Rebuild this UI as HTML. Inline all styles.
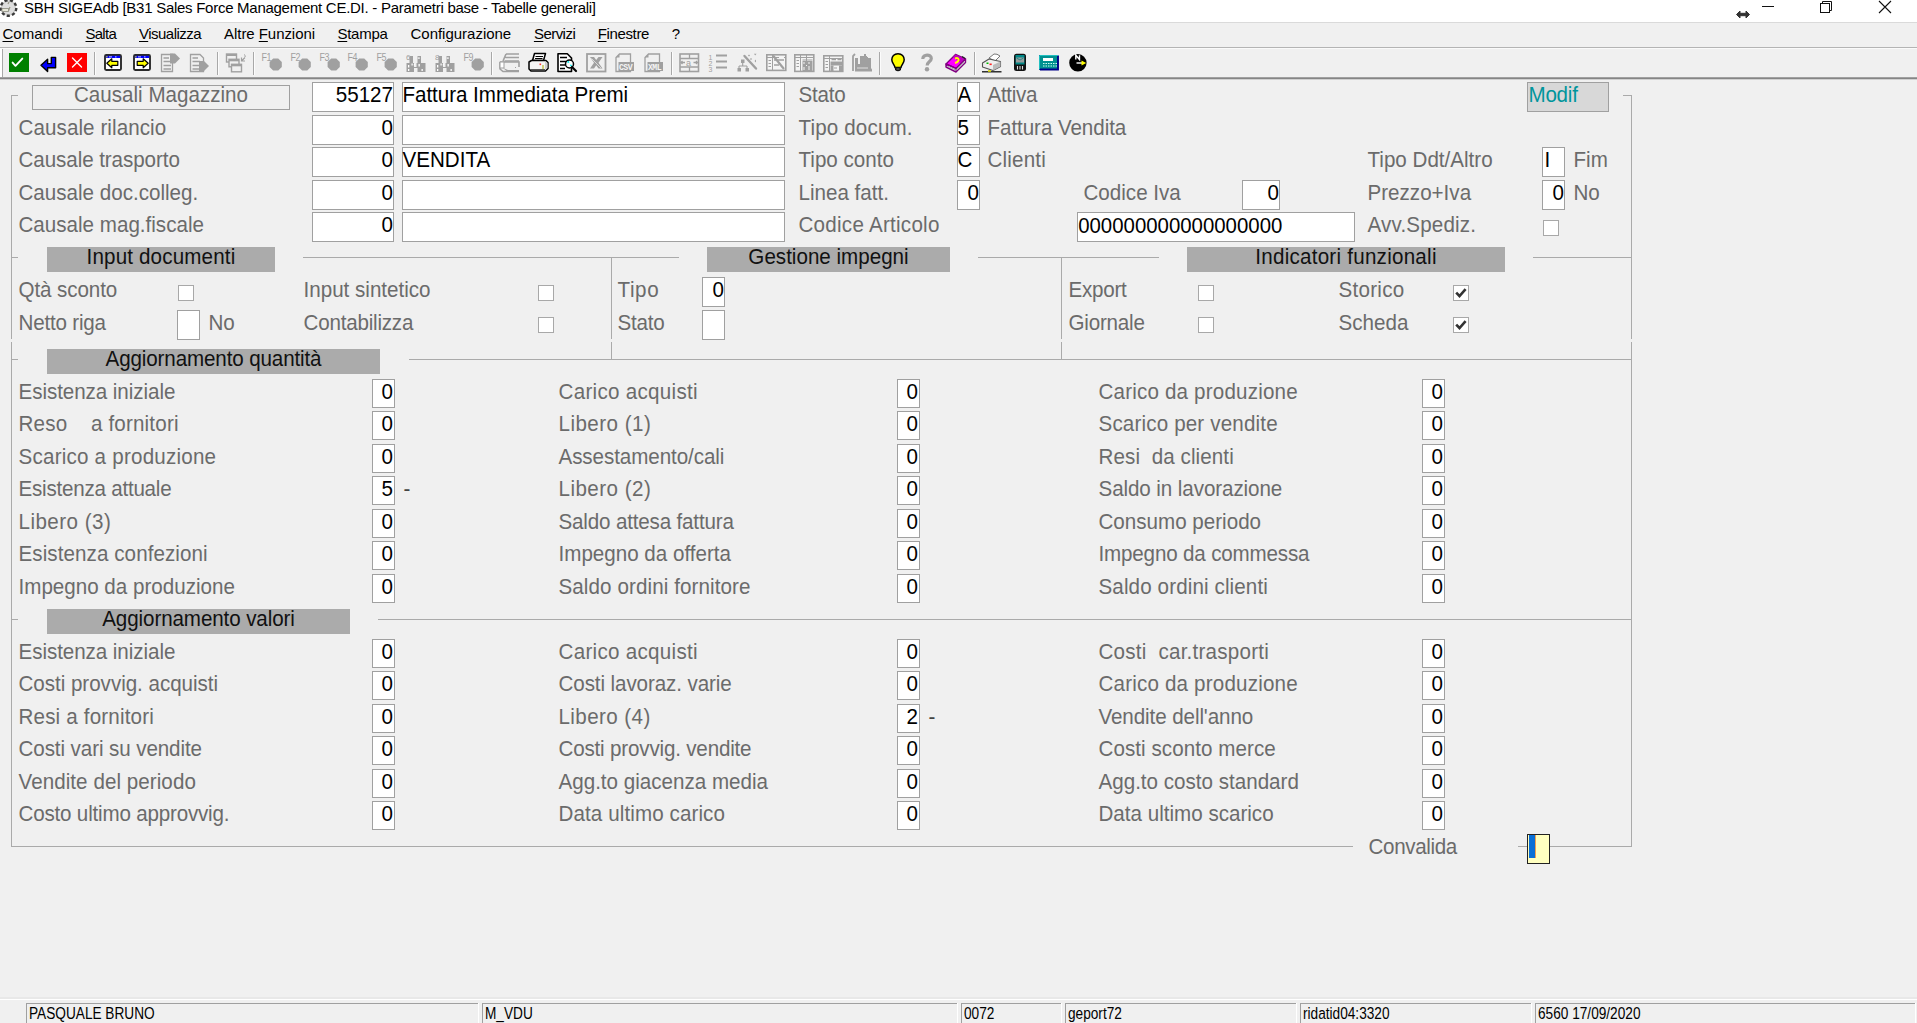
<!DOCTYPE html>
<html><head><meta charset="utf-8"><title>SBH SIGEAdb</title>
<style>
html,body{margin:0;padding:0;width:1917px;height:1023px;overflow:hidden;background:#f0f0f0;font-family:"Liberation Sans",sans-serif;}
.t{position:absolute;white-space:pre;}
.b{position:absolute;box-sizing:border-box;}
.l{position:absolute;}
</style></head><body>

<div class="l" style="left:0;top:0;width:1917px;height:22px;background:#fff"></div>
<div class="l" style="left:0;top:22px;width:1917px;height:1px;background:#dadada"></div>
<svg class="l" style="left:0;top:-1px" width="19" height="19" viewBox="0 0 19 19">
<circle cx="8.5" cy="9" r="7.8" fill="#d4d4d4" stroke="#3a3a3a" stroke-width="2.4" stroke-dasharray="3.2 2.2"/>
<circle cx="8.5" cy="9" r="6" fill="#dedede"/>
<path d="M2.5 11.5 H8.5 L10 8 M8 5 L9 3" fill="none" stroke="#9a9a88" stroke-width="1.3"/>
<rect x="2" y="9.5" width="6.5" height="3" fill="#e8e8d8" stroke="#8a8a80" stroke-width="0.8"/>
</svg>
<div class="t" style="left:24.0px;top:0.30px;font-size:15px;line-height:15px;color:#000;letter-spacing:-0.27px;">SBH SIGEAdb [B31 Sales Force Management CE.DI. - Parametri base - Tabelle generali]</div>
<svg class="l" style="left:1735px;top:9px" width="16" height="11" viewBox="0 0 16 11">
<path d="M1.5 5.5 L5 2 L5 4.3 L11 4.3 L11 2 L14.5 5.5 L11 9 L11 6.7 L5 6.7 L5 9 Z" fill="#333" stroke="#333" stroke-width="1"/></svg>
<div class="l" style="left:1762px;top:6px;width:12px;height:1px;background:#111"></div>
<svg class="l" style="left:1819px;top:0" width="15" height="15" viewBox="0 0 15 15">
<rect x="1.5" y="3.5" width="9" height="9" fill="none" stroke="#111" stroke-width="1"/>
<path d="M3.5 3.5 L3.5 1.5 L12.5 1.5 L12.5 10.5 L10.5 10.5" fill="none" stroke="#111" stroke-width="1"/></svg>
<svg class="l" style="left:1878px;top:0" width="15" height="15" viewBox="0 0 15 15">
<path d="M1 1 L13 13 M13 1 L1 13" fill="none" stroke="#111" stroke-width="1.1"/></svg>
<div class="t" style="left:2.5px;top:26.30px;font-size:15px;line-height:15px;color:#000;letter-spacing:0.010px;text-decoration-thickness:1px;text-underline-offset:2px;"><u>C</u>omandi</div>
<div class="t" style="left:85.5px;top:26.30px;font-size:15px;line-height:15px;color:#000;letter-spacing:-0.740px;text-decoration-thickness:1px;text-underline-offset:2px;"><u>S</u>alta</div>
<div class="t" style="left:139.0px;top:26.30px;font-size:15px;line-height:15px;color:#000;letter-spacing:-0.517px;text-decoration-thickness:1px;text-underline-offset:2px;"><u>V</u>isualizza</div>
<div class="t" style="left:224.1px;top:26.30px;font-size:15px;line-height:15px;color:#000;letter-spacing:-0.059px;text-decoration-thickness:1px;text-underline-offset:2px;">Altre <u>F</u>unzioni</div>
<div class="t" style="left:337.5px;top:26.30px;font-size:15px;line-height:15px;color:#000;letter-spacing:-0.283px;text-decoration-thickness:1px;text-underline-offset:2px;"><u>S</u>tampa</div>
<div class="t" style="left:410.5px;top:26.30px;font-size:15px;line-height:15px;color:#000;letter-spacing:-0.015px;text-decoration-thickness:1px;text-underline-offset:2px;">Confi<u>g</u>urazione</div>
<div class="t" style="left:533.9px;top:26.30px;font-size:15px;line-height:15px;color:#000;letter-spacing:-0.531px;text-decoration-thickness:1px;text-underline-offset:2px;"><u>S</u>ervizi</div>
<div class="t" style="left:597.7px;top:26.30px;font-size:15px;line-height:15px;color:#000;letter-spacing:-0.361px;text-decoration-thickness:1px;text-underline-offset:2px;"><u>F</u>inestre</div>
<div class="t" style="left:671.8px;top:26.30px;font-size:15px;line-height:15px;color:#000;letter-spacing:-2.040px;text-decoration-thickness:1px;text-underline-offset:2px;">?</div>
<div class="l" style="left:0;top:47px;width:1917px;height:1px;background:#b4b4b4"></div>
<div class="l" style="left:0;top:48px;width:1917px;height:1px;background:#fafafa"></div>
<div class="l" style="left:0;top:49px;width:2px;height:28px;background:#fff"></div>
<div class="l" style="left:2px;top:49px;width:1px;height:28px;background:#a8a8a8"></div>
<div class="l" style="left:0;top:77px;width:1917px;height:1px;background:#a0a0a0"></div>
<div class="l" style="left:0;top:78px;width:1917px;height:1px;background:#858585"></div>
<div class="l" style="left:0;top:79px;width:1917px;height:1px;background:#d0d0d0"></div>
<svg class="l" style="left:9px;top:53px" width="21" height="19" viewBox="0 0 21 19"><rect x="0" y="0" width="20" height="19" fill="#008000"/><path d="M3.6 9.6 L6.5 12.8 L13.3 5.6" fill="none" stroke="#fff" stroke-width="1.9" stroke-linecap="round" stroke-linejoin="round"/></svg>
<svg class="l" style="left:40px;top:56px" width="18" height="17" viewBox="0 0 18 17"><path d="M11.3 1.4 L15.6 1.4 L15.6 11.8 L7.6 11.8 L7.6 15.6 L1 9.3 L7.6 3.3 L7.6 7.6 L11.3 7.6 Z" fill="#0000ff" stroke="#000" stroke-width="1.4" stroke-linejoin="round"/></svg>
<svg class="l" style="left:67px;top:53px" width="21" height="19" viewBox="0 0 21 19"><rect x="0" y="0" width="20" height="19" fill="#ff0000"/><path d="M5.5 5 L14.5 14 M14.5 5 L5.5 14" stroke="#fff" stroke-width="1.4" stroke-linecap="round"/></svg>
<div class="l" style="left:94px;top:52px;width:1px;height:23px;background:#a8a8a8"></div>
<div class="l" style="left:95px;top:52px;width:1px;height:23px;background:#fcfcfc"></div>
<div class="l" style="left:217px;top:52px;width:1px;height:23px;background:#a8a8a8"></div>
<div class="l" style="left:218px;top:52px;width:1px;height:23px;background:#fcfcfc"></div>
<div class="l" style="left:253px;top:52px;width:1px;height:23px;background:#a8a8a8"></div>
<div class="l" style="left:254px;top:52px;width:1px;height:23px;background:#fcfcfc"></div>
<div class="l" style="left:491px;top:52px;width:1px;height:23px;background:#a8a8a8"></div>
<div class="l" style="left:492px;top:52px;width:1px;height:23px;background:#fcfcfc"></div>
<div class="l" style="left:671px;top:52px;width:1px;height:23px;background:#a8a8a8"></div>
<div class="l" style="left:672px;top:52px;width:1px;height:23px;background:#fcfcfc"></div>
<div class="l" style="left:879px;top:52px;width:1px;height:23px;background:#a8a8a8"></div>
<div class="l" style="left:880px;top:52px;width:1px;height:23px;background:#fcfcfc"></div>
<div class="l" style="left:974px;top:52px;width:1px;height:23px;background:#a8a8a8"></div>
<div class="l" style="left:975px;top:52px;width:1px;height:23px;background:#fcfcfc"></div>
<svg class="l" style="left:104px;top:54px" width="18" height="17" viewBox="0 0 18 17"><rect x="1" y="1" width="16" height="15" rx="1.2" fill="#fff" stroke="#2a2a2a" stroke-width="1.9"/><rect x="1.8" y="1.8" width="14.4" height="2.2" fill="#0000ff"/><rect x="2.3" y="2.2" width="1.2" height="1.2" fill="#ff0"/><rect x="5" y="2.5" width="3" height="0.8" fill="#fff"/><rect x="11" y="2.5" width="1.5" height="0.8" fill="#fff"/><path d="M2.8 9.3 L7.8 4.8 L7.8 7.3 L13.8 7.3 L13.8 11.3 L7.8 11.3 L7.8 13.8 Z" fill="#ffff00" stroke="#000" stroke-width="1.2" stroke-linejoin="round"/></svg>
<svg class="l" style="left:133px;top:54px" width="18" height="17" viewBox="0 0 18 17"><rect x="1" y="1" width="16" height="15" rx="1.2" fill="#fff" stroke="#2a2a2a" stroke-width="1.9"/><rect x="1.8" y="1.8" width="14.4" height="2.2" fill="#0000ff"/><rect x="2.3" y="2.2" width="1.2" height="1.2" fill="#ff0"/><rect x="5" y="2.5" width="3" height="0.8" fill="#fff"/><rect x="11" y="2.5" width="1.5" height="0.8" fill="#fff"/><path d="M15.2 9.3 L10.2 4.8 L10.2 7.3 L4.2 7.3 L4.2 11.3 L10.2 11.3 L10.2 13.8 Z" fill="#ffff00" stroke="#000" stroke-width="1.2" stroke-linejoin="round"/></svg>
<svg class="l" style="left:160px;top:53px" width="21" height="20" viewBox="0 0 21 20"><path d="M1.5 1.5 H12.5 L12.5 1.5 V18.5 H1.5 Z" fill="none" stroke="#a0a0a0" stroke-width="1.3"/><path d="M3.5 5 H9 M3.5 8.5 H11 M3.5 12.5 H11 M3.5 16 H11" stroke="#a0a0a0" stroke-width="1.4"/><path d="M10 0.5 L15 0.5 L20 5.5 L15 10.5 L10 10.5 Z" fill="#a0a0a0"/></svg>
<svg class="l" style="left:189px;top:53px" width="21" height="20" viewBox="0 0 21 20"><path d="M1.5 1.5 H11 L14.5 5 V18.5 H1.5 Z" fill="none" stroke="#a0a0a0" stroke-width="1.3"/><path d="M3.5 5 H9 M3.5 8.5 H11 M3.5 12.5 H11 M3.5 16 H11" stroke="#a0a0a0" stroke-width="1.4"/><path d="M10 8 L15 8 L20 13 L15 18 L10 18 Z" fill="#a0a0a0"/></svg>
<svg class="l" style="left:225px;top:53px" width="22" height="20" viewBox="0 0 22 20"><rect x="1.5" y="1" width="10" height="8" fill="#f0f0f0" stroke="#a0a0a0" stroke-width="1.4"/><rect x="1.5" y="1" width="10" height="2" fill="#a0a0a0"/><rect x="4" y="6.3" width="10" height="7.5" fill="#f0f0f0" stroke="#a0a0a0" stroke-width="1.4"/><rect x="4" y="6.3" width="10" height="2" fill="#a0a0a0"/><rect x="6.5" y="11.3" width="10" height="7.5" fill="#f0f0f0" stroke="#a0a0a0" stroke-width="1.4"/><rect x="6.5" y="11.3" width="10" height="2" fill="#a0a0a0"/><path d="M16.5 8 L20 4.5 M16.5 4.5 V8 H20" stroke="#a0a0a0" stroke-width="1.2" fill="none"/><path d="M19 1.5 Q21 2.5 20 4" stroke="#a0a0a0" stroke-width="1" fill="none"/></svg>
<svg class="l" style="left:261px;top:52px" width="24" height="22" viewBox="0 0 24 22"><text x="0.5" y="9" font-family="Liberation Sans" font-size="10.5" fill="#a0a0a0" transform="scale(0.85,1)" style="letter-spacing:-0.3px">F1</text><polygon points="20.80,15.03 17.23,18.60 12.17,18.60 8.60,15.03 8.60,9.97 12.17,6.40 17.23,6.40 20.80,9.97" fill="#a0a0a0"/></svg>
<svg class="l" style="left:290px;top:52px" width="24" height="22" viewBox="0 0 24 22"><text x="0.5" y="9" font-family="Liberation Sans" font-size="10.5" fill="#a0a0a0" transform="scale(0.85,1)" style="letter-spacing:-0.3px">F2</text><polygon points="20.80,15.03 17.23,18.60 12.17,18.60 8.60,15.03 8.60,9.97 12.17,6.40 17.23,6.40 20.80,9.97" fill="#a0a0a0"/></svg>
<svg class="l" style="left:319px;top:52px" width="24" height="22" viewBox="0 0 24 22"><text x="0.5" y="9" font-family="Liberation Sans" font-size="10.5" fill="#a0a0a0" transform="scale(0.85,1)" style="letter-spacing:-0.3px">F3</text><polygon points="20.80,15.03 17.23,18.60 12.17,18.60 8.60,15.03 8.60,9.97 12.17,6.40 17.23,6.40 20.80,9.97" fill="#a0a0a0"/></svg>
<svg class="l" style="left:347px;top:52px" width="24" height="22" viewBox="0 0 24 22"><text x="0.5" y="9" font-family="Liberation Sans" font-size="10.5" fill="#a0a0a0" transform="scale(0.85,1)" style="letter-spacing:-0.3px">F4</text><polygon points="20.80,15.03 17.23,18.60 12.17,18.60 8.60,15.03 8.60,9.97 12.17,6.40 17.23,6.40 20.80,9.97" fill="#a0a0a0"/></svg>
<svg class="l" style="left:376px;top:52px" width="24" height="22" viewBox="0 0 24 22"><text x="0.5" y="9" font-family="Liberation Sans" font-size="10.5" fill="#a0a0a0" transform="scale(0.85,1)" style="letter-spacing:-0.3px">F5</text><polygon points="20.80,15.03 17.23,18.60 12.17,18.60 8.60,15.03 8.60,9.97 12.17,6.40 17.23,6.40 20.80,9.97" fill="#a0a0a0"/></svg>
<svg class="l" style="left:406px;top:53px" width="21" height="20" viewBox="0 0 21 20"><text x="0" y="6.5" font-family="Liberation Sans" font-size="8" fill="#a0a0a0">6</text><path d="M3.5 3 H7 V10 H8 V14 H10.5 V10 H11.5 V3 H15 V10 H19.5 V19 H11.5 V15 H8 V19 H0.5 V10 H3.5 Z" fill="#a0a0a0"/><rect x="2" y="12" width="1.3" height="2.5" fill="#fff"/><rect x="2" y="16" width="1.3" height="2" fill="#fff"/><rect x="5.5" y="10.5" width="1.2" height="2" fill="#fff"/><rect x="12.5" y="11" width="1.3" height="2.5" fill="#fff"/><rect x="15.5" y="16" width="1.3" height="2" fill="#fff"/><rect x="11.8" y="4.5" width="2" height="1.2" fill="#fff"/><rect x="7.8" y="11" width="1" height="1.5" fill="#fff"/></svg>
<svg class="l" style="left:435px;top:53px" width="21" height="20" viewBox="0 0 21 20"><text x="0" y="6.5" font-family="Liberation Sans" font-size="8" fill="#a0a0a0">8</text><path d="M3.5 3 H7 V10 H8 V14 H10.5 V10 H11.5 V3 H15 V10 H19.5 V19 H11.5 V15 H8 V19 H0.5 V10 H3.5 Z" fill="#a0a0a0"/><rect x="2" y="12" width="1.3" height="2.5" fill="#fff"/><rect x="2" y="16" width="1.3" height="2" fill="#fff"/><rect x="5.5" y="10.5" width="1.2" height="2" fill="#fff"/><rect x="12.5" y="11" width="1.3" height="2.5" fill="#fff"/><rect x="15.5" y="16" width="1.3" height="2" fill="#fff"/><rect x="11.8" y="4.5" width="2" height="1.2" fill="#fff"/><rect x="7.8" y="11" width="1" height="1.5" fill="#fff"/></svg>
<svg class="l" style="left:463px;top:52px" width="24" height="22" viewBox="0 0 24 22"><text x="0.5" y="9" font-family="Liberation Sans" font-size="10.5" fill="#a0a0a0" transform="scale(0.85,1)" style="letter-spacing:-0.3px">F9</text><polygon points="20.80,15.03 17.23,18.60 12.17,18.60 8.60,15.03 8.60,9.97 12.17,6.40 17.23,6.40 20.80,9.97" fill="#a0a0a0"/></svg>
<svg class="l" style="left:499px;top:53px" width="22" height="20" viewBox="0 0 22 20"><path d="M7 1 H20 M6.5 4.5 H20 M5.5 8 H20 M7 1 L4 8" stroke="#a0a0a0" stroke-width="1.6" fill="none"/><path d="M1 9 H20 V14 M1 9 V16 L4 18.5 H20" fill="none" stroke="#a0a0a0" stroke-width="1.6"/><rect x="1" y="9" width="4" height="6" fill="#fff" stroke="#a0a0a0" stroke-width="1"/><path d="M4 15 L8 18.5 H20 V17 H9 Z" fill="#a0a0a0"/><rect x="16" y="14" width="1" height="1" fill="#a0a0a0"/></svg>
<svg class="l" style="left:528px;top:52px" width="21" height="20" viewBox="0 0 21 20"><path d="M6.5 1.5 H17.5 L15.5 8.5 H4.5 Z" fill="#fff" stroke="#000" stroke-width="1.5" stroke-linejoin="round"/><path d="M7.5 4.5 H15 M7 6.5 H14.5" stroke="#000" stroke-width="1.1"/><path d="M1 10 L3.5 8.5 H18 L20 10.5 V16.5 L17.5 19 H3 L1 17 Z" fill="#f4f4f4" stroke="#000" stroke-width="1.5" stroke-linejoin="round"/><path d="M2 17.5 H17" stroke="#555" stroke-width="1" fill="none"/><path d="M17 9.5 L19.5 11 V16 L17 18" fill="#ccc"/><rect x="11.5" y="11.5" width="1.6" height="1.6" fill="#f33"/><rect x="14.5" y="13" width="1" height="4" fill="#aa0"/></svg>
<svg class="l" style="left:557px;top:53px" width="21" height="20" viewBox="0 0 21 20"><path d="M1 0.8 H10.3 L14.5 5 V18.5 H1 Z" fill="#fff" stroke="#000" stroke-width="1.6" stroke-linejoin="round"/><path d="M3 4.5 H10 M3 8.5 H12 M3 12 H8 M3 15.5 H8" stroke="#000" stroke-width="1.4"/><circle cx="12.5" cy="11" r="4" fill="#fff" stroke="#000" stroke-width="1.5"/><path d="M10.5 9.5 L12 8.5 M13.5 13 L14.5 12" stroke="#1ee" stroke-width="1.8"/><path d="M15 14 L19 18" stroke="#000" stroke-width="2.2" stroke-linecap="round"/></svg>
<svg class="l" style="left:586px;top:53px" width="21" height="20" viewBox="0 0 21 20"><rect x="1" y="1" width="18.5" height="17.5" fill="none" stroke="#a0a0a0" stroke-width="1.8"/><path d="M4 4 H8 L10.2 7 L12.5 4 H16.5 L12.5 9.7 L16.5 15.5 H12.5 L10.2 12.3 L8 15.5 H4 L8 9.7 Z" fill="#a0a0a0"/><path d="M5.5 5.5 L15 15" stroke="#f0f0f0" stroke-width="0.7"/></svg>
<svg class="l" style="left:615px;top:53px" width="20" height="20" viewBox="0 0 20 20"><path d="M4.5 1 H15.5 V18.5 H1 V4.5 Z" fill="none" stroke="#a0a0a0" stroke-width="1.3"/><path d="M1 4.5 L4.5 1 V4.5 Z" fill="#a0a0a0"/><rect x="3.5" y="9" width="15.5" height="9" fill="#a0a0a0"/><text x="4" y="16.8" font-family="Liberation Mono" font-size="8.2" font-weight="bold" fill="#f4f4f4" style="letter-spacing:-0.6px">CSV</text></svg>
<svg class="l" style="left:644px;top:53px" width="20" height="20" viewBox="0 0 20 20"><path d="M4.5 1 H15.5 V18.5 H1 V4.5 Z" fill="none" stroke="#a0a0a0" stroke-width="1.3"/><path d="M1 4.5 L4.5 1 V4.5 Z" fill="#a0a0a0"/><rect x="3.5" y="9" width="15.5" height="9" fill="#a0a0a0"/><text x="4" y="16.8" font-family="Liberation Mono" font-size="8.2" font-weight="bold" fill="#f4f4f4" style="letter-spacing:-0.6px">XML</text></svg>
<svg class="l" style="left:679px;top:53px" width="21" height="20" viewBox="0 0 21 20"><rect x="1" y="1" width="18.5" height="17.5" fill="none" stroke="#a0a0a0" stroke-width="1.6"/><path d="M1 5.5 H19.5 M1 14 H19.5 M10.5 1 V5.5 M10.5 14 V18.5" stroke="#a0a0a0" stroke-width="1.3"/><text x="7" y="13" font-family="Liberation Sans" font-size="9" fill="#a0a0a0">a</text><path d="M2 9.5 H6 M14.5 9.5 H18.5 M3.5 8 L2 9.5 L3.5 11 M17 8 L18.5 9.5 L17 11" stroke="#a0a0a0" stroke-width="1.3" fill="none"/></svg>
<svg class="l" style="left:708px;top:53px" width="20" height="20" viewBox="0 0 20 20"><text x="0.5" y="6.5" font-family="Liberation Sans" font-size="7" fill="#a0a0a0">1</text><text x="0.5" y="12.5" font-family="Liberation Sans" font-size="7" fill="#a0a0a0">2</text><text x="0.5" y="18.5" font-family="Liberation Sans" font-size="7" fill="#a0a0a0">3</text><path d="M8 2.5 H19 M8 8.5 H19 M8 14.5 H19" stroke="#a0a0a0" stroke-width="1.8"/></svg>
<svg class="l" style="left:737px;top:53px" width="21" height="20" viewBox="0 0 21 20"><path d="M7.5 3 L19 15.5" stroke="#a0a0a0" stroke-width="2.4" stroke-linecap="round"/><rect x="4" y="6.5" width="3.5" height="3.5" fill="#a0a0a0"/><path d="M5.7 10 V13 M2 13 H10 M2 13 V15 M10 13 V15" stroke="#a0a0a0" stroke-width="1.1" fill="none"/><rect x="0.5" y="15" width="3.5" height="3.5" fill="#a0a0a0"/><rect x="8.5" y="15" width="3.5" height="3.5" fill="#a0a0a0"/><path d="M12 1.5 L13 2.5 L12 3.5 L11 2.5 Z M17 0.8 H19.5 L18.2 2.5 Z M14 5 L15 6 L14 7 L13 6 Z M19 6.5 V9.5 L17.5 8 Z" fill="#a0a0a0"/></svg>
<svg class="l" style="left:766px;top:54px" width="21" height="18" viewBox="0 0 21 18"><rect x="0.8" y="0.8" width="19" height="15.6" fill="#f4f4f4" stroke="#a0a0a0" stroke-width="1.6"/><path d="M1 3.5 H19.5 M6.5 1 V16" stroke="#a0a0a0" stroke-width="1"/><path d="M2.5 6.5 H5 M2.5 9.5 H5 M2.5 12.5 H5" stroke="#a0a0a0" stroke-width="1.2"/><path d="M7 1.5 L18 15" stroke="#a0a0a0" stroke-width="2.2"/><path d="M8 6 H18 M8 11 H13" stroke="#a0a0a0" stroke-width="1.3"/><rect x="13" y="2" width="5" height="2" fill="#f4f4f4"/></svg>
<svg class="l" style="left:794px;top:54px" width="21" height="19" viewBox="0 0 21 19"><rect x="0.8" y="0.8" width="19" height="16.6" fill="#f4f4f4" stroke="#a0a0a0" stroke-width="1.6"/><path d="M1 3.5 H19.5 M6.5 1 V17" stroke="#a0a0a0" stroke-width="1"/><path d="M2.5 6.5 H5 M2.5 9.5 H5 M2.5 12.5 H5" stroke="#a0a0a0" stroke-width="1.2"/><path d="M12.5 1 V17 M8.5 6 H18.5" stroke="#a0a0a0" stroke-width="1"/><rect x="8.5" y="7" width="10" height="10" fill="#a0a0a0"/><path d="M10 8 V10 M10 13 V16 M15 8 V10 M15 12 V16 M12.5 11 V12" stroke="#f4f4f4" stroke-width="1"/></svg>
<svg class="l" style="left:823px;top:55px" width="21" height="18" viewBox="0 0 21 18"><rect x="0.8" y="0.8" width="19" height="15.6" fill="#f4f4f4" stroke="#a0a0a0" stroke-width="1.6"/><path d="M1 3.5 H19.5 M6.5 1 V16" stroke="#a0a0a0" stroke-width="1"/><path d="M2.5 6.5 H5 M2.5 9.5 H5 M2.5 12.5 H5" stroke="#a0a0a0" stroke-width="1.2"/><path d="M8.5 4.5 H13 M14.5 4.5 H18.5" stroke="#a0a0a0" stroke-width="1.4"/><rect x="7.5" y="6.5" width="12" height="4" fill="#a0a0a0"/><rect x="7.5" y="10.5" width="3" height="6" fill="#a0a0a0"/><rect x="16" y="10.5" width="3.5" height="6" fill="#a0a0a0"/><path d="M11 13 H14" stroke="#a0a0a0" stroke-width="1"/></svg>
<svg class="l" style="left:852px;top:53px" width="21" height="20" viewBox="0 0 21 20"><path d="M1 18 V3 L3 1" stroke="#a0a0a0" stroke-width="1.8" fill="none"/><path d="M3 17.5 V5 H6 V11 H8 V3 H12 V1 H14 V3 H16 V5 H19 V15 L20 16.5 V18.5 H3 Z" fill="#a0a0a0"/><path d="M5 15 H16" stroke="#f0f0f0" stroke-width="0.8"/><rect x="15" y="2" width="2" height="2" fill="#f0f0f0"/></svg>
<svg class="l" style="left:891px;top:53px" width="15" height="20" viewBox="0 0 15 20"><path d="M7 0.8 C3 0.8 0.8 3.5 0.8 6.8 C0.8 9.8 3.6 11.8 4 14.5 H10 C10.4 11.8 13.2 9.8 13.2 6.8 C13.2 3.5 11 0.8 7 0.8 Z" fill="#ffff00" stroke="#000" stroke-width="1.5"/><path d="M4 14 H10 V17 Q7 19.5 4 17 Z" fill="#111"/><path d="M5.5 16 H8.5" stroke="#888" stroke-width="1"/></svg>
<svg class="l" style="left:920px;top:53px" width="14" height="20" viewBox="0 0 14 20"><path d="M2.8 6 C2.8 0.8 11.3 0.8 11.3 5.5 C11.3 8.5 7.2 8.5 7.2 12.5" fill="none" stroke="#a0a0a0" stroke-width="3.2"/><circle cx="7" cy="16.2" r="2.2" fill="#a0a0a0"/></svg>
<svg class="l" style="left:945px;top:53px" width="22" height="20" viewBox="0 0 22 20"><path d="M1 11 L10.5 1.5 L20.5 6 L11 15.5 Z" fill="#ff00ff" stroke="#800080" stroke-width="1.4" stroke-linejoin="round"/><path d="M10.5 1.5 L20.5 6 L16 10.5 L8 4 Z" fill="#c000c0"/><path d="M1 11 V14 L11 19 L20.5 9.5 V6 L11 15.5 Z" fill="#fff" stroke="#800080" stroke-width="1.4" stroke-linejoin="round"/><path d="M11 15.5 V19" stroke="#800080" stroke-width="1.3"/><path d="M10 5.5 Q14 4 13.5 7.5 Q12.5 9.5 10 10" fill="none" stroke="#ffff00" stroke-width="2"/><path d="M2.2 13 L11 17.3 L19.5 8.8" stroke="#999" stroke-width="0.9" fill="none"/><path d="M17 3.5 L20 5.5" stroke="#222" stroke-width="1.5"/></svg>
<svg class="l" style="left:981px;top:53px" width="22" height="20" viewBox="0 0 22 20"><path d="M8 5 L13 1 Q16 0.5 19 3 L14 8 Z" fill="#fff" stroke="#777" stroke-width="1"/><path d="M1.5 10 L8 6 L19.5 8.5 V13.5 L12 17.5 L1.5 14 Z" fill="#eee" stroke="#555" stroke-width="1.1" stroke-linejoin="round"/><path d="M12 12 L19.5 8.5 V13.5 L12 17.5 Z" fill="#bbb"/><rect x="5.5" y="9.5" width="2" height="1.5" fill="#0b0"/><rect x="8.5" y="10.5" width="2.2" height="1.6" fill="#f22"/><path d="M1 18.8 H20.5" stroke="#111" stroke-width="1.3"/><path d="M7 18 H10" stroke="#dd0" stroke-width="1.6"/></svg>
<svg class="l" style="left:1013px;top:53px" width="14" height="19" viewBox="0 0 14 19"><rect x="1" y="0.8" width="12" height="17.2" rx="2.5" fill="#111"/><rect x="2.5" y="2" width="9" height="9.5" fill="#088"/><rect x="3" y="4.5" width="8" height="5" fill="#9a9a9a"/><path d="M3.5 5 L7 7 L10.5 5" stroke="#088" stroke-width="0.8" fill="none"/><path d="M4.5 13 V16.5 M7 13 V16.5 M9.5 13 V16.5" stroke="#ddd" stroke-width="1.1"/></svg>
<svg class="l" style="left:1039px;top:55px" width="20" height="16" viewBox="0 0 20 16"><rect x="0.5" y="0.5" width="18.5" height="14" fill="#009090" stroke="#000080" stroke-width="1"/><path d="M0.5 0.5 H19 M0.5 0.5 V14.5" stroke="#20c0c0" stroke-width="1"/><rect x="4" y="3" width="10" height="3" fill="#fff"/><path d="M4 8.5 H18 M4 11 H18" stroke="#cfe" stroke-width="1" stroke-dasharray="1.5 1"/><path d="M1 14.5 H19 V1" stroke="#00008a" stroke-width="1.8" fill="none"/></svg>
<svg class="l" style="left:1069px;top:53px" width="19" height="20" viewBox="0 0 19 20"><circle cx="8.9" cy="9.8" r="8.7" fill="#000"/><path d="M6.8 6.5 V2.2 L10.5 6.5 V2.2" stroke="#fff" stroke-width="1.4" fill="none"/><path d="M7.5 10 H13" stroke="#fff" stroke-width="1.4"/><path d="M12.5 7.5 L17.2 10 L12.5 12.5 Z" fill="#ff0"/></svg>
<div class="l" style="left:11px;top:95px;width:1px;height:244px;background:#aaaaaa"></div>
<div class="l" style="left:11px;top:342px;width:1px;height:505px;background:#aaaaaa"></div>
<div class="l" style="left:1631px;top:95px;width:1px;height:244px;background:#aaaaaa"></div>
<div class="l" style="left:1631px;top:342px;width:1px;height:505px;background:#aaaaaa"></div>
<div class="l" style="left:11px;top:95px;width:7px;height:1px;background:#aaaaaa"></div>
<div class="l" style="left:1623px;top:95px;width:9px;height:1px;background:#aaaaaa"></div>
<div class="l" style="left:11px;top:257px;width:7px;height:1px;background:#aaaaaa"></div>
<div class="l" style="left:303px;top:257px;width:376px;height:1px;background:#aaaaaa"></div>
<div class="l" style="left:978px;top:257px;width:181px;height:1px;background:#aaaaaa"></div>
<div class="l" style="left:1533px;top:257px;width:99px;height:1px;background:#aaaaaa"></div>
<div class="l" style="left:611px;top:257px;width:1px;height:82px;background:#aaaaaa"></div>
<div class="l" style="left:611px;top:342px;width:1px;height:18px;background:#aaaaaa"></div>
<div class="l" style="left:1061px;top:257px;width:1px;height:82px;background:#aaaaaa"></div>
<div class="l" style="left:1061px;top:342px;width:1px;height:18px;background:#aaaaaa"></div>
<div class="l" style="left:11px;top:359px;width:7px;height:1px;background:#aaaaaa"></div>
<div class="l" style="left:409px;top:359px;width:1223px;height:1px;background:#aaaaaa"></div>
<div class="l" style="left:11px;top:619px;width:7px;height:1px;background:#aaaaaa"></div>
<div class="l" style="left:378px;top:619px;width:1254px;height:1px;background:#aaaaaa"></div>
<div class="l" style="left:11px;top:846px;width:1342px;height:1px;background:#aaaaaa"></div>
<div class="l" style="left:1518px;top:846px;width:114px;height:1px;background:#aaaaaa"></div>
<div class="b" style="left:32px;top:85px;width:258px;height:25px;background:transparent;border:1px solid #a0a0a0;"></div>
<div class="t" style="left:32px;width:258px;text-align:center;top:84.76px;font-size:20.6px;line-height:20.6px;color:#6b6b6b;transform:scaleY(1.065);transform-origin:0 17.44px;">Causali Magazzino</div>
<div class="b" style="left:312px;top:82px;width:82px;height:30px;background:#fff;border:1px solid #a0a0a0;"></div>
<div class="t" style="left:312px;width:81px;text-align:right;top:84.76px;font-size:20.6px;line-height:20.6px;color:#000;transform:scaleY(1.065);transform-origin:0 17.44px;">55127</div>
<div class="b" style="left:402px;top:82px;width:383px;height:30px;background:#fff;border:1px solid #a0a0a0;"></div>
<div class="t" style="left:402.5px;top:84.76px;font-size:20.6px;line-height:20.6px;color:#000;transform:scaleY(1.065);transform-origin:0 17.44px;letter-spacing:-0.045px;">Fattura Immediata Premi</div>
<div class="t" style="left:18.5px;top:117.76px;font-size:20.6px;line-height:20.6px;color:#6b6b6b;transform:scaleY(1.065);transform-origin:0 17.44px;letter-spacing:0.080px;">Causale rilancio</div>
<div class="b" style="left:312px;top:115px;width:82px;height:30px;background:#fff;border:1px solid #a0a0a0;"></div>
<div class="t" style="left:312px;width:81px;text-align:right;top:117.76px;font-size:20.6px;line-height:20.6px;color:#000;transform:scaleY(1.065);transform-origin:0 17.44px;">0</div>
<div class="b" style="left:402px;top:115px;width:383px;height:30px;background:#fff;border:1px solid #a0a0a0;"></div>
<div class="t" style="left:18.5px;top:149.76px;font-size:20.6px;line-height:20.6px;color:#6b6b6b;transform:scaleY(1.065);transform-origin:0 17.44px;letter-spacing:-0.075px;">Causale trasporto</div>
<div class="b" style="left:312px;top:147px;width:82px;height:30px;background:#fff;border:1px solid #a0a0a0;"></div>
<div class="t" style="left:312px;width:81px;text-align:right;top:149.76px;font-size:20.6px;line-height:20.6px;color:#000;transform:scaleY(1.065);transform-origin:0 17.44px;">0</div>
<div class="b" style="left:402px;top:147px;width:383px;height:30px;background:#fff;border:1px solid #a0a0a0;"></div>
<div class="t" style="left:402.5px;top:149.76px;font-size:20.6px;line-height:20.6px;color:#000;transform:scaleY(1.065);transform-origin:0 17.44px;">VENDITA</div>
<div class="t" style="left:18.5px;top:182.76px;font-size:20.6px;line-height:20.6px;color:#6b6b6b;transform:scaleY(1.065);transform-origin:0 17.44px;">Causale doc.colleg.</div>
<div class="b" style="left:312px;top:180px;width:82px;height:30px;background:#fff;border:1px solid #a0a0a0;"></div>
<div class="t" style="left:312px;width:81px;text-align:right;top:182.76px;font-size:20.6px;line-height:20.6px;color:#000;transform:scaleY(1.065);transform-origin:0 17.44px;">0</div>
<div class="b" style="left:402px;top:180px;width:383px;height:30px;background:#fff;border:1px solid #a0a0a0;"></div>
<div class="t" style="left:18.5px;top:214.76px;font-size:20.6px;line-height:20.6px;color:#6b6b6b;transform:scaleY(1.065);transform-origin:0 17.44px;">Causale mag.fiscale</div>
<div class="b" style="left:312px;top:212px;width:82px;height:30px;background:#fff;border:1px solid #a0a0a0;"></div>
<div class="t" style="left:312px;width:81px;text-align:right;top:214.76px;font-size:20.6px;line-height:20.6px;color:#000;transform:scaleY(1.065);transform-origin:0 17.44px;">0</div>
<div class="b" style="left:402px;top:212px;width:383px;height:30px;background:#fff;border:1px solid #a0a0a0;"></div>
<div class="t" style="left:798.5px;top:84.76px;font-size:20.6px;line-height:20.6px;color:#6b6b6b;transform:scaleY(1.065);transform-origin:0 17.44px;letter-spacing:-0.250px;">Stato</div>
<div class="b" style="left:957px;top:82px;width:23px;height:30px;background:#fff;border:1px solid #a0a0a0;"></div>
<div class="t" style="left:957.5px;top:84.76px;font-size:20.6px;line-height:20.6px;color:#000;transform:scaleY(1.065);transform-origin:0 17.44px;">A</div>
<div class="t" style="left:987.5px;top:84.76px;font-size:20.6px;line-height:20.6px;color:#6b6b6b;transform:scaleY(1.065);transform-origin:0 17.44px;letter-spacing:-0.300px;">Attiva</div>
<div class="t" style="left:798.5px;top:117.76px;font-size:20.6px;line-height:20.6px;color:#6b6b6b;transform:scaleY(1.065);transform-origin:0 17.44px;letter-spacing:0.150px;">Tipo docum.</div>
<div class="b" style="left:957px;top:115px;width:23px;height:30px;background:#fff;border:1px solid #a0a0a0;"></div>
<div class="t" style="left:957.5px;top:117.76px;font-size:20.6px;line-height:20.6px;color:#000;transform:scaleY(1.065);transform-origin:0 17.44px;">5</div>
<div class="t" style="left:987.5px;top:117.76px;font-size:20.6px;line-height:20.6px;color:#6b6b6b;transform:scaleY(1.065);transform-origin:0 17.44px;letter-spacing:-0.064px;">Fattura Vendita</div>
<div class="t" style="left:798.5px;top:149.76px;font-size:20.6px;line-height:20.6px;color:#6b6b6b;transform:scaleY(1.065);transform-origin:0 17.44px;">Tipo conto</div>
<div class="b" style="left:957px;top:147px;width:23px;height:30px;background:#fff;border:1px solid #a0a0a0;"></div>
<div class="t" style="left:957.5px;top:149.76px;font-size:20.6px;line-height:20.6px;color:#000;transform:scaleY(1.065);transform-origin:0 17.44px;">C</div>
<div class="t" style="left:987.5px;top:149.76px;font-size:20.6px;line-height:20.6px;color:#6b6b6b;transform:scaleY(1.065);transform-origin:0 17.44px;letter-spacing:0.167px;">Clienti</div>
<div class="t" style="left:798.5px;top:182.76px;font-size:20.6px;line-height:20.6px;color:#6b6b6b;transform:scaleY(1.065);transform-origin:0 17.44px;">Linea fatt.</div>
<div class="b" style="left:957px;top:180px;width:23px;height:30px;background:#fff;border:1px solid #a0a0a0;"></div>
<div class="t" style="left:957px;width:22px;text-align:right;top:182.76px;font-size:20.6px;line-height:20.6px;color:#000;transform:scaleY(1.065);transform-origin:0 17.44px;">0</div>
<div class="t" style="left:798.5px;top:214.76px;font-size:20.6px;line-height:20.6px;color:#6b6b6b;transform:scaleY(1.065);transform-origin:0 17.44px;letter-spacing:0.250px;">Codice Articolo</div>
<div class="t" style="left:1083.5px;top:182.76px;font-size:20.6px;line-height:20.6px;color:#6b6b6b;transform:scaleY(1.065);transform-origin:0 17.44px;">Codice Iva</div>
<div class="b" style="left:1242px;top:180px;width:38px;height:30px;background:#fff;border:1px solid #a0a0a0;"></div>
<div class="t" style="left:1242px;width:37px;text-align:right;top:182.76px;font-size:20.6px;line-height:20.6px;color:#000;transform:scaleY(1.065);transform-origin:0 17.44px;">0</div>
<div class="b" style="left:1077px;top:212px;width:278px;height:30px;background:#fff;border:1px solid #a0a0a0;"></div>
<div class="t" style="left:1078.2px;top:215.93px;font-size:20.4px;line-height:20.4px;color:#000;transform:scaleY(1.05);transform-origin:0 17.27px;">000000000000000000</div>
<div class="t" style="left:1367.5px;top:149.76px;font-size:20.6px;line-height:20.6px;color:#6b6b6b;transform:scaleY(1.065);transform-origin:0 17.44px;">Tipo Ddt/Altro</div>
<div class="b" style="left:1542px;top:147px;width:23px;height:30px;background:#fff;border:1px solid #a0a0a0;"></div>
<div class="t" style="left:1544.5px;top:149.76px;font-size:20.6px;line-height:20.6px;color:#000;transform:scaleY(1.065);transform-origin:0 17.44px;">I</div>
<div class="t" style="left:1573.5px;top:149.76px;font-size:20.6px;line-height:20.6px;color:#6b6b6b;transform:scaleY(1.065);transform-origin:0 17.44px;">Fim</div>
<div class="t" style="left:1367.5px;top:182.76px;font-size:20.6px;line-height:20.6px;color:#6b6b6b;transform:scaleY(1.065);transform-origin:0 17.44px;">Prezzo+Iva</div>
<div class="b" style="left:1542px;top:180px;width:23px;height:30px;background:#fff;border:1px solid #a0a0a0;"></div>
<div class="t" style="left:1542px;width:22px;text-align:right;top:182.76px;font-size:20.6px;line-height:20.6px;color:#000;transform:scaleY(1.065);transform-origin:0 17.44px;">0</div>
<div class="t" style="left:1573.5px;top:182.76px;font-size:20.6px;line-height:20.6px;color:#6b6b6b;transform:scaleY(1.065);transform-origin:0 17.44px;">No</div>
<div class="t" style="left:1367.5px;top:214.76px;font-size:20.6px;line-height:20.6px;color:#6b6b6b;transform:scaleY(1.065);transform-origin:0 17.44px;letter-spacing:0.170px;">Avv.Spediz.</div>
<div class="b" style="left:1543px;top:220px;width:16px;height:16px;background:#fff;border:1px solid #a8a8a8"></div>
<div class="b" style="left:1527px;top:82px;width:82px;height:30px;background:#d8d8d8;border:1px solid #a0a0a0;"></div>
<div class="t" style="left:1528.5px;top:84.76px;font-size:20.6px;line-height:20.6px;color:#00959c;transform:scaleY(1.065);transform-origin:0 17.44px;letter-spacing:-0.250px;">Modif</div>
<div class="b" style="left:47px;top:247px;width:228px;height:25px;background:#ababab"></div>
<div class="t" style="left:47px;width:228px;text-align:center;top:247.16px;font-size:20.6px;line-height:20.6px;color:#111;transform:scaleY(1.065);transform-origin:0 17.44px;letter-spacing:0.157px;">Input documenti</div>
<div class="b" style="left:707px;top:247px;width:243px;height:25px;background:#ababab"></div>
<div class="t" style="left:707px;width:243px;text-align:center;top:247.16px;font-size:20.6px;line-height:20.6px;color:#111;transform:scaleY(1.065);transform-origin:0 17.44px;">Gestione impegni</div>
<div class="b" style="left:1187px;top:247px;width:318px;height:25px;background:#ababab"></div>
<div class="t" style="left:1187px;width:318px;text-align:center;top:247.16px;font-size:20.6px;line-height:20.6px;color:#111;transform:scaleY(1.065);transform-origin:0 17.44px;letter-spacing:0.245px;">Indicatori funzionali</div>
<div class="t" style="left:18.5px;top:279.76px;font-size:20.6px;line-height:20.6px;color:#6b6b6b;transform:scaleY(1.065);transform-origin:0 17.44px;letter-spacing:-0.089px;">Qtà sconto</div>
<div class="b" style="left:178px;top:285px;width:16px;height:16px;background:#fff;border:1px solid #a8a8a8"></div>
<div class="t" style="left:18.5px;top:312.76px;font-size:20.6px;line-height:20.6px;color:#6b6b6b;transform:scaleY(1.065);transform-origin:0 17.44px;letter-spacing:-0.200px;">Netto riga</div>
<div class="b" style="left:177px;top:310px;width:23px;height:30px;background:#fff;border:1px solid #a0a0a0;"></div>
<div class="t" style="left:208.5px;top:312.76px;font-size:20.6px;line-height:20.6px;color:#6b6b6b;transform:scaleY(1.065);transform-origin:0 17.44px;">No</div>
<div class="t" style="left:303.5px;top:279.76px;font-size:20.6px;line-height:20.6px;color:#6b6b6b;transform:scaleY(1.065);transform-origin:0 17.44px;">Input sintetico</div>
<div class="b" style="left:538px;top:285px;width:16px;height:16px;background:#fff;border:1px solid #a8a8a8"></div>
<div class="t" style="left:303.5px;top:312.76px;font-size:20.6px;line-height:20.6px;color:#6b6b6b;transform:scaleY(1.065);transform-origin:0 17.44px;letter-spacing:-0.209px;">Contabilizza</div>
<div class="b" style="left:538px;top:317px;width:16px;height:16px;background:#fff;border:1px solid #a8a8a8"></div>
<div class="t" style="left:617.5px;top:279.76px;font-size:20.6px;line-height:20.6px;color:#6b6b6b;transform:scaleY(1.065);transform-origin:0 17.44px;letter-spacing:0.600px;">Tipo</div>
<div class="b" style="left:702px;top:277px;width:23px;height:30px;background:#fff;border:1px solid #a0a0a0;"></div>
<div class="t" style="left:702px;width:22px;text-align:right;top:279.76px;font-size:20.6px;line-height:20.6px;color:#000;transform:scaleY(1.065);transform-origin:0 17.44px;">0</div>
<div class="t" style="left:617.5px;top:312.76px;font-size:20.6px;line-height:20.6px;color:#6b6b6b;transform:scaleY(1.065);transform-origin:0 17.44px;letter-spacing:-0.250px;">Stato</div>
<div class="b" style="left:702px;top:310px;width:23px;height:30px;background:#fff;border:1px solid #a0a0a0;"></div>
<div class="t" style="left:1068.5px;top:279.76px;font-size:20.6px;line-height:20.6px;color:#6b6b6b;transform:scaleY(1.065);transform-origin:0 17.44px;letter-spacing:-0.260px;">Export</div>
<div class="b" style="left:1198px;top:285px;width:16px;height:16px;background:#fff;border:1px solid #a8a8a8"></div>
<div class="t" style="left:1068.5px;top:312.76px;font-size:20.6px;line-height:20.6px;color:#6b6b6b;transform:scaleY(1.065);transform-origin:0 17.44px;letter-spacing:-0.214px;">Giornale</div>
<div class="b" style="left:1198px;top:317px;width:16px;height:16px;background:#fff;border:1px solid #a8a8a8"></div>
<div class="t" style="left:1338.5px;top:279.76px;font-size:20.6px;line-height:20.6px;color:#6b6b6b;transform:scaleY(1.065);transform-origin:0 17.44px;letter-spacing:0.267px;">Storico</div>
<div class="b" style="left:1453px;top:285px;width:16px;height:16px;background:#fff;border:1px solid #a8a8a8"></div>
<svg class="l" style="left:1453px;top:285px" width="16" height="16" viewBox="0 0 16 16"><path d="M3.2 7.6 L6.5 11 L12.6 4.2" fill="none" stroke="#333" stroke-width="2.6"/></svg>
<div class="t" style="left:1338.5px;top:312.76px;font-size:20.6px;line-height:20.6px;color:#6b6b6b;transform:scaleY(1.065);transform-origin:0 17.44px;">Scheda</div>
<div class="b" style="left:1453px;top:317px;width:16px;height:16px;background:#fff;border:1px solid #a8a8a8"></div>
<svg class="l" style="left:1453px;top:317px" width="16" height="16" viewBox="0 0 16 16"><path d="M3.2 7.6 L6.5 11 L12.6 4.2" fill="none" stroke="#333" stroke-width="2.6"/></svg>
<div class="b" style="left:47px;top:349px;width:333px;height:25px;background:#ababab"></div>
<div class="t" style="left:47px;width:333px;text-align:center;top:349.16px;font-size:20.6px;line-height:20.6px;color:#111;transform:scaleY(1.065);transform-origin:0 17.44px;letter-spacing:-0.129px;">Aggiornamento quantità</div>
<div class="t" style="left:18.5px;top:381.76px;font-size:20.6px;line-height:20.6px;color:#6b6b6b;transform:scaleY(1.065);transform-origin:0 17.44px;letter-spacing:-0.065px;">Esistenza iniziale</div>
<div class="b" style="left:372px;top:379px;width:23px;height:29px;background:#fff;border:1px solid #a0a0a0;"></div>
<div class="t" style="left:372px;width:21px;text-align:right;top:381.76px;font-size:20.6px;line-height:20.6px;color:#000;transform:scaleY(1.065);transform-origin:0 17.44px;">0</div>
<div class="t" style="left:558.5px;top:381.76px;font-size:20.6px;line-height:20.6px;color:#6b6b6b;transform:scaleY(1.065);transform-origin:0 17.44px;letter-spacing:0.286px;">Carico acquisti</div>
<div class="b" style="left:897px;top:379px;width:23px;height:29px;background:#fff;border:1px solid #a0a0a0;"></div>
<div class="t" style="left:897px;width:21px;text-align:right;top:381.76px;font-size:20.6px;line-height:20.6px;color:#000;transform:scaleY(1.065);transform-origin:0 17.44px;">0</div>
<div class="t" style="left:1098.5px;top:381.76px;font-size:20.6px;line-height:20.6px;color:#6b6b6b;transform:scaleY(1.065);transform-origin:0 17.44px;letter-spacing:0.176px;">Carico da produzione</div>
<div class="b" style="left:1422px;top:379px;width:23px;height:29px;background:#fff;border:1px solid #a0a0a0;"></div>
<div class="t" style="left:1422px;width:21px;text-align:right;top:381.76px;font-size:20.6px;line-height:20.6px;color:#000;transform:scaleY(1.065);transform-origin:0 17.44px;">0</div>
<div class="t" style="left:18.5px;top:413.76px;font-size:20.6px;line-height:20.6px;color:#6b6b6b;transform:scaleY(1.065);transform-origin:0 17.44px;letter-spacing:0.178px;">Reso    a fornitori</div>
<div class="b" style="left:372px;top:411px;width:23px;height:29px;background:#fff;border:1px solid #a0a0a0;"></div>
<div class="t" style="left:372px;width:21px;text-align:right;top:413.76px;font-size:20.6px;line-height:20.6px;color:#000;transform:scaleY(1.065);transform-origin:0 17.44px;">0</div>
<div class="t" style="left:558.5px;top:413.76px;font-size:20.6px;line-height:20.6px;color:#6b6b6b;transform:scaleY(1.065);transform-origin:0 17.44px;letter-spacing:0.456px;">Libero (1)</div>
<div class="b" style="left:897px;top:411px;width:23px;height:29px;background:#fff;border:1px solid #a0a0a0;"></div>
<div class="t" style="left:897px;width:21px;text-align:right;top:413.76px;font-size:20.6px;line-height:20.6px;color:#000;transform:scaleY(1.065);transform-origin:0 17.44px;">0</div>
<div class="t" style="left:1098.5px;top:413.76px;font-size:20.6px;line-height:20.6px;color:#6b6b6b;transform:scaleY(1.065);transform-origin:0 17.44px;letter-spacing:0.156px;">Scarico per vendite</div>
<div class="b" style="left:1422px;top:411px;width:23px;height:29px;background:#fff;border:1px solid #a0a0a0;"></div>
<div class="t" style="left:1422px;width:21px;text-align:right;top:413.76px;font-size:20.6px;line-height:20.6px;color:#000;transform:scaleY(1.065);transform-origin:0 17.44px;">0</div>
<div class="t" style="left:18.5px;top:446.76px;font-size:20.6px;line-height:20.6px;color:#6b6b6b;transform:scaleY(1.065);transform-origin:0 17.44px;letter-spacing:0.216px;">Scarico a produzione</div>
<div class="b" style="left:372px;top:444px;width:23px;height:29px;background:#fff;border:1px solid #a0a0a0;"></div>
<div class="t" style="left:372px;width:21px;text-align:right;top:446.76px;font-size:20.6px;line-height:20.6px;color:#000;transform:scaleY(1.065);transform-origin:0 17.44px;">0</div>
<div class="t" style="left:558.5px;top:446.76px;font-size:20.6px;line-height:20.6px;color:#6b6b6b;transform:scaleY(1.065);transform-origin:0 17.44px;letter-spacing:-0.081px;">Assestamento/cali</div>
<div class="b" style="left:897px;top:444px;width:23px;height:29px;background:#fff;border:1px solid #a0a0a0;"></div>
<div class="t" style="left:897px;width:21px;text-align:right;top:446.76px;font-size:20.6px;line-height:20.6px;color:#000;transform:scaleY(1.065);transform-origin:0 17.44px;">0</div>
<div class="t" style="left:1098.5px;top:446.76px;font-size:20.6px;line-height:20.6px;color:#6b6b6b;transform:scaleY(1.065);transform-origin:0 17.44px;letter-spacing:0.087px;">Resi  da clienti</div>
<div class="b" style="left:1422px;top:444px;width:23px;height:29px;background:#fff;border:1px solid #a0a0a0;"></div>
<div class="t" style="left:1422px;width:21px;text-align:right;top:446.76px;font-size:20.6px;line-height:20.6px;color:#000;transform:scaleY(1.065);transform-origin:0 17.44px;">0</div>
<div class="t" style="left:18.5px;top:478.76px;font-size:20.6px;line-height:20.6px;color:#6b6b6b;transform:scaleY(1.065);transform-origin:0 17.44px;letter-spacing:-0.231px;">Esistenza attuale</div>
<div class="b" style="left:372px;top:476px;width:23px;height:29px;background:#fff;border:1px solid #a0a0a0;"></div>
<div class="t" style="left:372px;width:21px;text-align:right;top:478.76px;font-size:20.6px;line-height:20.6px;color:#000;transform:scaleY(1.065);transform-origin:0 17.44px;">5</div>
<div class="t" style="left:558.5px;top:478.76px;font-size:20.6px;line-height:20.6px;color:#6b6b6b;transform:scaleY(1.065);transform-origin:0 17.44px;letter-spacing:0.456px;">Libero (2)</div>
<div class="b" style="left:897px;top:476px;width:23px;height:29px;background:#fff;border:1px solid #a0a0a0;"></div>
<div class="t" style="left:897px;width:21px;text-align:right;top:478.76px;font-size:20.6px;line-height:20.6px;color:#000;transform:scaleY(1.065);transform-origin:0 17.44px;">0</div>
<div class="t" style="left:1098.5px;top:478.76px;font-size:20.6px;line-height:20.6px;color:#6b6b6b;transform:scaleY(1.065);transform-origin:0 17.44px;letter-spacing:-0.089px;">Saldo in lavorazione</div>
<div class="b" style="left:1422px;top:476px;width:23px;height:29px;background:#fff;border:1px solid #a0a0a0;"></div>
<div class="t" style="left:1422px;width:21px;text-align:right;top:478.76px;font-size:20.6px;line-height:20.6px;color:#000;transform:scaleY(1.065);transform-origin:0 17.44px;">0</div>
<div class="t" style="left:18.5px;top:511.76px;font-size:20.6px;line-height:20.6px;color:#6b6b6b;transform:scaleY(1.065);transform-origin:0 17.44px;letter-spacing:0.456px;">Libero (3)</div>
<div class="b" style="left:372px;top:509px;width:23px;height:29px;background:#fff;border:1px solid #a0a0a0;"></div>
<div class="t" style="left:372px;width:21px;text-align:right;top:511.76px;font-size:20.6px;line-height:20.6px;color:#000;transform:scaleY(1.065);transform-origin:0 17.44px;">0</div>
<div class="t" style="left:558.5px;top:511.76px;font-size:20.6px;line-height:20.6px;color:#6b6b6b;transform:scaleY(1.065);transform-origin:0 17.44px;letter-spacing:-0.168px;">Saldo attesa fattura</div>
<div class="b" style="left:897px;top:509px;width:23px;height:29px;background:#fff;border:1px solid #a0a0a0;"></div>
<div class="t" style="left:897px;width:21px;text-align:right;top:511.76px;font-size:20.6px;line-height:20.6px;color:#000;transform:scaleY(1.065);transform-origin:0 17.44px;">0</div>
<div class="t" style="left:1098.5px;top:511.76px;font-size:20.6px;line-height:20.6px;color:#6b6b6b;transform:scaleY(1.065);transform-origin:0 17.44px;">Consumo periodo</div>
<div class="b" style="left:1422px;top:509px;width:23px;height:29px;background:#fff;border:1px solid #a0a0a0;"></div>
<div class="t" style="left:1422px;width:21px;text-align:right;top:511.76px;font-size:20.6px;line-height:20.6px;color:#000;transform:scaleY(1.065);transform-origin:0 17.44px;">0</div>
<div class="t" style="left:18.5px;top:543.76px;font-size:20.6px;line-height:20.6px;color:#6b6b6b;transform:scaleY(1.065);transform-origin:0 17.44px;letter-spacing:0.074px;">Esistenza confezioni</div>
<div class="b" style="left:372px;top:541px;width:23px;height:29px;background:#fff;border:1px solid #a0a0a0;"></div>
<div class="t" style="left:372px;width:21px;text-align:right;top:543.76px;font-size:20.6px;line-height:20.6px;color:#000;transform:scaleY(1.065);transform-origin:0 17.44px;">0</div>
<div class="t" style="left:558.5px;top:543.76px;font-size:20.6px;line-height:20.6px;color:#6b6b6b;transform:scaleY(1.065);transform-origin:0 17.44px;">Impegno da offerta</div>
<div class="b" style="left:897px;top:541px;width:23px;height:29px;background:#fff;border:1px solid #a0a0a0;"></div>
<div class="t" style="left:897px;width:21px;text-align:right;top:543.76px;font-size:20.6px;line-height:20.6px;color:#000;transform:scaleY(1.065);transform-origin:0 17.44px;">0</div>
<div class="t" style="left:1098.5px;top:543.76px;font-size:20.6px;line-height:20.6px;color:#6b6b6b;transform:scaleY(1.065);transform-origin:0 17.44px;letter-spacing:-0.167px;">Impegno da commessa</div>
<div class="b" style="left:1422px;top:541px;width:23px;height:29px;background:#fff;border:1px solid #a0a0a0;"></div>
<div class="t" style="left:1422px;width:21px;text-align:right;top:543.76px;font-size:20.6px;line-height:20.6px;color:#000;transform:scaleY(1.065);transform-origin:0 17.44px;">0</div>
<div class="t" style="left:18.5px;top:576.76px;font-size:20.6px;line-height:20.6px;color:#6b6b6b;transform:scaleY(1.065);transform-origin:0 17.44px;">Impegno da produzione</div>
<div class="b" style="left:372px;top:574px;width:23px;height:29px;background:#fff;border:1px solid #a0a0a0;"></div>
<div class="t" style="left:372px;width:21px;text-align:right;top:576.76px;font-size:20.6px;line-height:20.6px;color:#000;transform:scaleY(1.065);transform-origin:0 17.44px;">0</div>
<div class="t" style="left:558.5px;top:576.76px;font-size:20.6px;line-height:20.6px;color:#6b6b6b;transform:scaleY(1.065);transform-origin:0 17.44px;letter-spacing:0.090px;">Saldo ordini fornitore</div>
<div class="b" style="left:897px;top:574px;width:23px;height:29px;background:#fff;border:1px solid #a0a0a0;"></div>
<div class="t" style="left:897px;width:21px;text-align:right;top:576.76px;font-size:20.6px;line-height:20.6px;color:#000;transform:scaleY(1.065);transform-origin:0 17.44px;">0</div>
<div class="t" style="left:1098.5px;top:576.76px;font-size:20.6px;line-height:20.6px;color:#6b6b6b;transform:scaleY(1.065);transform-origin:0 17.44px;letter-spacing:0.116px;">Saldo ordini clienti</div>
<div class="b" style="left:1422px;top:574px;width:23px;height:29px;background:#fff;border:1px solid #a0a0a0;"></div>
<div class="t" style="left:1422px;width:21px;text-align:right;top:576.76px;font-size:20.6px;line-height:20.6px;color:#000;transform:scaleY(1.065);transform-origin:0 17.44px;">0</div>
<div class="t" style="left:403.5px;top:478.76px;font-size:20.6px;line-height:20.6px;color:#444;transform:scaleY(1.065);transform-origin:0 17.44px;">-</div>
<div class="b" style="left:47px;top:609px;width:303px;height:25px;background:#ababab"></div>
<div class="t" style="left:47px;width:303px;text-align:center;top:609.16px;font-size:20.6px;line-height:20.6px;color:#111;transform:scaleY(1.065);transform-origin:0 17.44px;letter-spacing:-0.105px;">Aggiornamento valori</div>
<div class="t" style="left:18.5px;top:641.76px;font-size:20.6px;line-height:20.6px;color:#6b6b6b;transform:scaleY(1.065);transform-origin:0 17.44px;letter-spacing:-0.065px;">Esistenza iniziale</div>
<div class="b" style="left:372px;top:639px;width:23px;height:29px;background:#fff;border:1px solid #a0a0a0;"></div>
<div class="t" style="left:372px;width:21px;text-align:right;top:641.76px;font-size:20.6px;line-height:20.6px;color:#000;transform:scaleY(1.065);transform-origin:0 17.44px;">0</div>
<div class="t" style="left:558.5px;top:641.76px;font-size:20.6px;line-height:20.6px;color:#6b6b6b;transform:scaleY(1.065);transform-origin:0 17.44px;letter-spacing:0.286px;">Carico acquisti</div>
<div class="b" style="left:897px;top:639px;width:23px;height:29px;background:#fff;border:1px solid #a0a0a0;"></div>
<div class="t" style="left:897px;width:21px;text-align:right;top:641.76px;font-size:20.6px;line-height:20.6px;color:#000;transform:scaleY(1.065);transform-origin:0 17.44px;">0</div>
<div class="t" style="left:1098.5px;top:641.76px;font-size:20.6px;line-height:20.6px;color:#6b6b6b;transform:scaleY(1.065);transform-origin:0 17.44px;letter-spacing:0.226px;">Costi  car.trasporti</div>
<div class="b" style="left:1422px;top:639px;width:23px;height:29px;background:#fff;border:1px solid #a0a0a0;"></div>
<div class="t" style="left:1422px;width:21px;text-align:right;top:641.76px;font-size:20.6px;line-height:20.6px;color:#000;transform:scaleY(1.065);transform-origin:0 17.44px;">0</div>
<div class="t" style="left:18.5px;top:673.76px;font-size:20.6px;line-height:20.6px;color:#6b6b6b;transform:scaleY(1.065);transform-origin:0 17.44px;letter-spacing:-0.032px;">Costi provvig. acquisti</div>
<div class="b" style="left:372px;top:671px;width:23px;height:29px;background:#fff;border:1px solid #a0a0a0;"></div>
<div class="t" style="left:372px;width:21px;text-align:right;top:673.76px;font-size:20.6px;line-height:20.6px;color:#000;transform:scaleY(1.065);transform-origin:0 17.44px;">0</div>
<div class="t" style="left:558.5px;top:673.76px;font-size:20.6px;line-height:20.6px;color:#6b6b6b;transform:scaleY(1.065);transform-origin:0 17.44px;letter-spacing:-0.095px;">Costi lavoraz. varie</div>
<div class="b" style="left:897px;top:671px;width:23px;height:29px;background:#fff;border:1px solid #a0a0a0;"></div>
<div class="t" style="left:897px;width:21px;text-align:right;top:673.76px;font-size:20.6px;line-height:20.6px;color:#000;transform:scaleY(1.065);transform-origin:0 17.44px;">0</div>
<div class="t" style="left:1098.5px;top:673.76px;font-size:20.6px;line-height:20.6px;color:#6b6b6b;transform:scaleY(1.065);transform-origin:0 17.44px;letter-spacing:0.176px;">Carico da produzione</div>
<div class="b" style="left:1422px;top:671px;width:23px;height:29px;background:#fff;border:1px solid #a0a0a0;"></div>
<div class="t" style="left:1422px;width:21px;text-align:right;top:673.76px;font-size:20.6px;line-height:20.6px;color:#000;transform:scaleY(1.065);transform-origin:0 17.44px;">0</div>
<div class="t" style="left:18.5px;top:706.76px;font-size:20.6px;line-height:20.6px;color:#6b6b6b;transform:scaleY(1.065);transform-origin:0 17.44px;letter-spacing:0.167px;">Resi a fornitori</div>
<div class="b" style="left:372px;top:704px;width:23px;height:29px;background:#fff;border:1px solid #a0a0a0;"></div>
<div class="t" style="left:372px;width:21px;text-align:right;top:706.76px;font-size:20.6px;line-height:20.6px;color:#000;transform:scaleY(1.065);transform-origin:0 17.44px;">0</div>
<div class="t" style="left:558.5px;top:706.76px;font-size:20.6px;line-height:20.6px;color:#6b6b6b;transform:scaleY(1.065);transform-origin:0 17.44px;letter-spacing:0.400px;">Libero (4)</div>
<div class="b" style="left:897px;top:704px;width:23px;height:29px;background:#fff;border:1px solid #a0a0a0;"></div>
<div class="t" style="left:897px;width:21px;text-align:right;top:706.76px;font-size:20.6px;line-height:20.6px;color:#000;transform:scaleY(1.065);transform-origin:0 17.44px;">2</div>
<div class="t" style="left:1098.5px;top:706.76px;font-size:20.6px;line-height:20.6px;color:#6b6b6b;transform:scaleY(1.065);transform-origin:0 17.44px;letter-spacing:-0.094px;">Vendite dell'anno</div>
<div class="b" style="left:1422px;top:704px;width:23px;height:29px;background:#fff;border:1px solid #a0a0a0;"></div>
<div class="t" style="left:1422px;width:21px;text-align:right;top:706.76px;font-size:20.6px;line-height:20.6px;color:#000;transform:scaleY(1.065);transform-origin:0 17.44px;">0</div>
<div class="t" style="left:18.5px;top:738.76px;font-size:20.6px;line-height:20.6px;color:#6b6b6b;transform:scaleY(1.065);transform-origin:0 17.44px;letter-spacing:-0.095px;">Costi vari su vendite</div>
<div class="b" style="left:372px;top:736px;width:23px;height:29px;background:#fff;border:1px solid #a0a0a0;"></div>
<div class="t" style="left:372px;width:21px;text-align:right;top:738.76px;font-size:20.6px;line-height:20.6px;color:#000;transform:scaleY(1.065);transform-origin:0 17.44px;">0</div>
<div class="t" style="left:558.5px;top:738.76px;font-size:20.6px;line-height:20.6px;color:#6b6b6b;transform:scaleY(1.065);transform-origin:0 17.44px;letter-spacing:-0.181px;">Costi provvig. vendite</div>
<div class="b" style="left:897px;top:736px;width:23px;height:29px;background:#fff;border:1px solid #a0a0a0;"></div>
<div class="t" style="left:897px;width:21px;text-align:right;top:738.76px;font-size:20.6px;line-height:20.6px;color:#000;transform:scaleY(1.065);transform-origin:0 17.44px;">0</div>
<div class="t" style="left:1098.5px;top:738.76px;font-size:20.6px;line-height:20.6px;color:#6b6b6b;transform:scaleY(1.065);transform-origin:0 17.44px;letter-spacing:0.059px;">Costi sconto merce</div>
<div class="b" style="left:1422px;top:736px;width:23px;height:29px;background:#fff;border:1px solid #a0a0a0;"></div>
<div class="t" style="left:1422px;width:21px;text-align:right;top:738.76px;font-size:20.6px;line-height:20.6px;color:#000;transform:scaleY(1.065);transform-origin:0 17.44px;">0</div>
<div class="t" style="left:18.5px;top:771.76px;font-size:20.6px;line-height:20.6px;color:#6b6b6b;transform:scaleY(1.065);transform-origin:0 17.44px;letter-spacing:0.056px;">Vendite del periodo</div>
<div class="b" style="left:372px;top:769px;width:23px;height:29px;background:#fff;border:1px solid #a0a0a0;"></div>
<div class="t" style="left:372px;width:21px;text-align:right;top:771.76px;font-size:20.6px;line-height:20.6px;color:#000;transform:scaleY(1.065);transform-origin:0 17.44px;">0</div>
<div class="t" style="left:558.5px;top:771.76px;font-size:20.6px;line-height:20.6px;color:#6b6b6b;transform:scaleY(1.065);transform-origin:0 17.44px;">Agg.to giacenza media</div>
<div class="b" style="left:897px;top:769px;width:23px;height:29px;background:#fff;border:1px solid #a0a0a0;"></div>
<div class="t" style="left:897px;width:21px;text-align:right;top:771.76px;font-size:20.6px;line-height:20.6px;color:#000;transform:scaleY(1.065);transform-origin:0 17.44px;">0</div>
<div class="t" style="left:1098.5px;top:771.76px;font-size:20.6px;line-height:20.6px;color:#6b6b6b;transform:scaleY(1.065);transform-origin:0 17.44px;">Agg.to costo standard</div>
<div class="b" style="left:1422px;top:769px;width:23px;height:29px;background:#fff;border:1px solid #a0a0a0;"></div>
<div class="t" style="left:1422px;width:21px;text-align:right;top:771.76px;font-size:20.6px;line-height:20.6px;color:#000;transform:scaleY(1.065);transform-origin:0 17.44px;">0</div>
<div class="t" style="left:18.5px;top:803.76px;font-size:20.6px;line-height:20.6px;color:#6b6b6b;transform:scaleY(1.065);transform-origin:0 17.44px;letter-spacing:-0.191px;">Costo ultimo approvvig.</div>
<div class="b" style="left:372px;top:801px;width:23px;height:29px;background:#fff;border:1px solid #a0a0a0;"></div>
<div class="t" style="left:372px;width:21px;text-align:right;top:803.76px;font-size:20.6px;line-height:20.6px;color:#000;transform:scaleY(1.065);transform-origin:0 17.44px;">0</div>
<div class="t" style="left:558.5px;top:803.76px;font-size:20.6px;line-height:20.6px;color:#6b6b6b;transform:scaleY(1.065);transform-origin:0 17.44px;letter-spacing:0.094px;">Data ultimo carico</div>
<div class="b" style="left:897px;top:801px;width:23px;height:29px;background:#fff;border:1px solid #a0a0a0;"></div>
<div class="t" style="left:897px;width:21px;text-align:right;top:803.76px;font-size:20.6px;line-height:20.6px;color:#000;transform:scaleY(1.065);transform-origin:0 17.44px;">0</div>
<div class="t" style="left:1098.5px;top:803.76px;font-size:20.6px;line-height:20.6px;color:#6b6b6b;transform:scaleY(1.065);transform-origin:0 17.44px;">Data ultimo scarico</div>
<div class="b" style="left:1422px;top:801px;width:23px;height:29px;background:#fff;border:1px solid #a0a0a0;"></div>
<div class="t" style="left:1422px;width:21px;text-align:right;top:803.76px;font-size:20.6px;line-height:20.6px;color:#000;transform:scaleY(1.065);transform-origin:0 17.44px;">0</div>
<div class="t" style="left:928.5px;top:706.76px;font-size:20.6px;line-height:20.6px;color:#444;transform:scaleY(1.065);transform-origin:0 17.44px;">-</div>
<div class="t" style="left:1368.5px;top:836.76px;font-size:20.6px;line-height:20.6px;color:#6b6b6b;transform:scaleY(1.065);transform-origin:0 17.44px;letter-spacing:-0.350px;">Convalida</div>
<div class="b" style="left:1527px;top:834px;width:23px;height:30px;background:#ffffc0;border:1.5px solid #222"></div>
<div class="l" style="left:1529px;top:835px;width:6px;height:23px;background:#0a6fd6"></div>
<div class="l" style="left:1535px;top:835px;width:1px;height:23px;background:#f0a050"></div>
<div class="l" style="left:0;top:997px;width:1917px;height:2px;background:#e8e8e8"></div>
<div class="l" style="left:0;top:999px;width:1917px;height:1px;background:#fff"></div>
<div class="l" style="left:26px;top:1003px;width:452px;height:1px;background:#a0a0a0"></div>
<div class="l" style="left:26px;top:1003px;width:1px;height:20px;background:#a0a0a0"></div>
<div class="l" style="left:478px;top:1003px;width:1px;height:20px;background:#fff"></div>
<div class="t" style="left:28.5px;top:1006.30px;font-size:15px;line-height:15px;color:#000;transform:scale(0.91,1.07);transform-origin:0 13.6px;">PASQUALE BRUNO</div>
<div class="l" style="left:482px;top:1003px;width:475px;height:1px;background:#a0a0a0"></div>
<div class="l" style="left:482px;top:1003px;width:1px;height:20px;background:#a0a0a0"></div>
<div class="l" style="left:957px;top:1003px;width:1px;height:20px;background:#fff"></div>
<div class="t" style="left:484.5px;top:1006.30px;font-size:15px;line-height:15px;color:#000;transform:scale(0.91,1.07);transform-origin:0 13.6px;">M_VDU</div>
<div class="l" style="left:961px;top:1003px;width:100px;height:1px;background:#a0a0a0"></div>
<div class="l" style="left:961px;top:1003px;width:1px;height:20px;background:#a0a0a0"></div>
<div class="l" style="left:1061px;top:1003px;width:1px;height:20px;background:#fff"></div>
<div class="t" style="left:963.5px;top:1006.30px;font-size:15px;line-height:15px;color:#000;transform:scale(0.91,1.07);transform-origin:0 13.6px;">0072</div>
<div class="l" style="left:1065px;top:1003px;width:231px;height:1px;background:#a0a0a0"></div>
<div class="l" style="left:1065px;top:1003px;width:1px;height:20px;background:#a0a0a0"></div>
<div class="l" style="left:1296px;top:1003px;width:1px;height:20px;background:#fff"></div>
<div class="t" style="left:1067.5px;top:1006.30px;font-size:15px;line-height:15px;color:#000;transform:scale(0.91,1.07);transform-origin:0 13.6px;">geport72</div>
<div class="l" style="left:1300px;top:1003px;width:231px;height:1px;background:#a0a0a0"></div>
<div class="l" style="left:1300px;top:1003px;width:1px;height:20px;background:#a0a0a0"></div>
<div class="l" style="left:1531px;top:1003px;width:1px;height:20px;background:#fff"></div>
<div class="t" style="left:1302.5px;top:1006.30px;font-size:15px;line-height:15px;color:#000;transform:scale(0.91,1.07);transform-origin:0 13.6px;">ridatid04:3320</div>
<div class="l" style="left:1535px;top:1003px;width:380px;height:1px;background:#a0a0a0"></div>
<div class="l" style="left:1535px;top:1003px;width:1px;height:20px;background:#a0a0a0"></div>
<div class="l" style="left:1915px;top:1003px;width:1px;height:20px;background:#fff"></div>
<div class="t" style="left:1537.5px;top:1006.30px;font-size:15px;line-height:15px;color:#000;transform:scale(0.91,1.07);transform-origin:0 13.6px;">6560 17/09/2020</div>
</body></html>
